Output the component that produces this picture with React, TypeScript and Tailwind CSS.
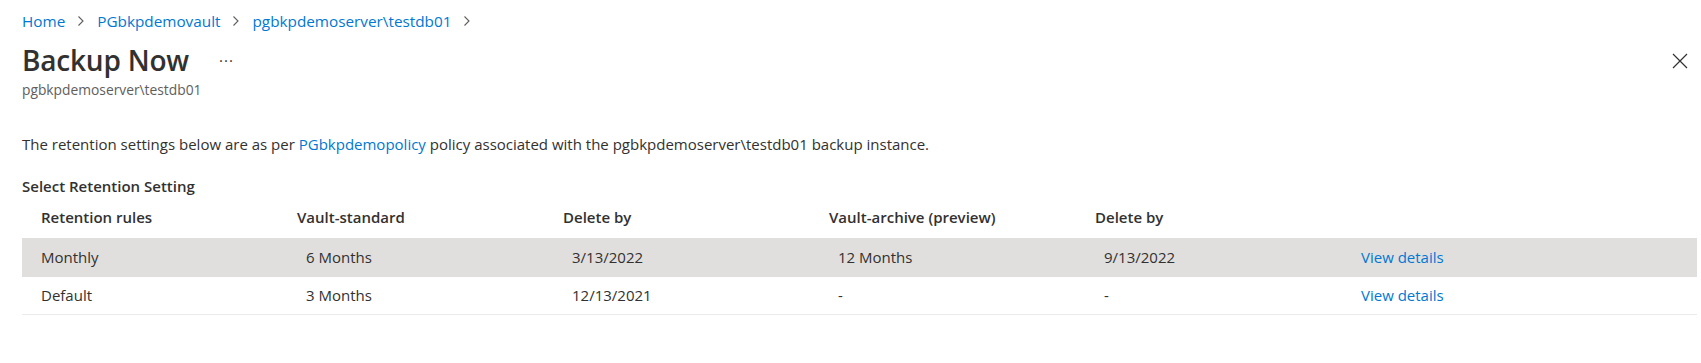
import React from "react";

const font = { fontFamily: '"Segoe UI", "Open Sans", "Noto Sans", sans-serif' };

function Chevron() {
  return (
    <svg width="8" height="12" viewBox="0 0 8 12" className="mx-[12px]">
      <path d="M1.5 1.5 L6 6 L1.5 10.5" fill="none" stroke="#605e5c" strokeWidth="1.1" />
    </svg>
  );
}

const rows = [
  { rule: "Monthly", std: "6 Months", del1: "3/13/2022", arch: "12 Months", del2: "9/13/2022", selected: true },
  { rule: "Default", std: "3 Months", del1: "12/13/2021", arch: "-", del2: "-", selected: false },
];

export default function App() {
  return (
    <div className="w-[1701px] h-[363px] bg-white text-[#323130] pl-[22px] pr-[4px]" style={font}>
      <div className="flex items-center pt-[9px] h-[32px] text-[15.3px] leading-[20px] text-[#0078d4]">
        <span>Home</span>
        <Chevron />
        <span>PGbkpdemovault</span>
        <Chevron />
        <span>pgbkpdemoserver\testdb01</span>
        <Chevron />
      </div>
      <div className="flex items-center h-[36px] mt-[10px]">
        <span className="text-[28px] font-semibold leading-[36px] tracking-[-0.2px]">Backup Now</span>
        <span className="ml-[30px] text-[15px] leading-none tracking-[1px] pb-[8px]">...</span>
        <div className="flex-1" />
        <svg width="16" height="16" viewBox="0 0 16 16" className="mr-[9px] mt-[2px]">
          <path d="M1 1 L15 15 M15 1 L1 15" stroke="#323130" strokeWidth="1.2" />
        </svg>
      </div>
      <div className="text-[13.8px] leading-[18px] text-[#605e5c] mt-[3px]">pgbkpdemoserver\testdb01</div>
      <div className="text-[15px] leading-[20px] mt-[35px]">
        The retention settings below are as per <span className="text-[#0078d4]">PGbkpdemopolicy</span> policy
        associated with the pgbkpdemoserver\testdb01 backup instance.
      </div>
      <div className="text-[15px] leading-[20px] font-semibold mt-[22px]">Select Retention Setting</div>
      <div className="text-[15px]">
        <div className="flex items-center h-[42px] font-semibold">
          <div className="w-[266px] pl-[19px]">Retention rules</div>
          <div className="w-[266px] pl-[9px]">Vault-standard</div>
          <div className="w-[266px] pl-[9px]">Delete by</div>
          <div className="w-[266px] pl-[9px]">Vault-archive (preview)</div>
          <div className="w-[266px] pl-[9px]">Delete by</div>
          <div className="flex-1" />
        </div>
        {rows.map((r) => (
          <div
            key={r.rule}
            className={
              r.selected
                ? "flex items-center h-[39px] bg-[#e1dfdd]"
                : "flex items-center h-[38px] border-b border-[#edebe9]"
            }
          >
            <div className="w-[266px] pl-[19px]">{r.rule}</div>
            <div className="w-[266px] pl-[18px]">{r.std}</div>
            <div className="w-[266px] pl-[18px]">{r.del1}</div>
            <div className="w-[266px] pl-[18px]">{r.arch}</div>
            <div className="w-[266px] pl-[18px]">{r.del2}</div>
            <div className="flex-1 pl-[9px] text-[#0078d4]">View details</div>
          </div>
        ))}
      </div>
    </div>
  );
}
